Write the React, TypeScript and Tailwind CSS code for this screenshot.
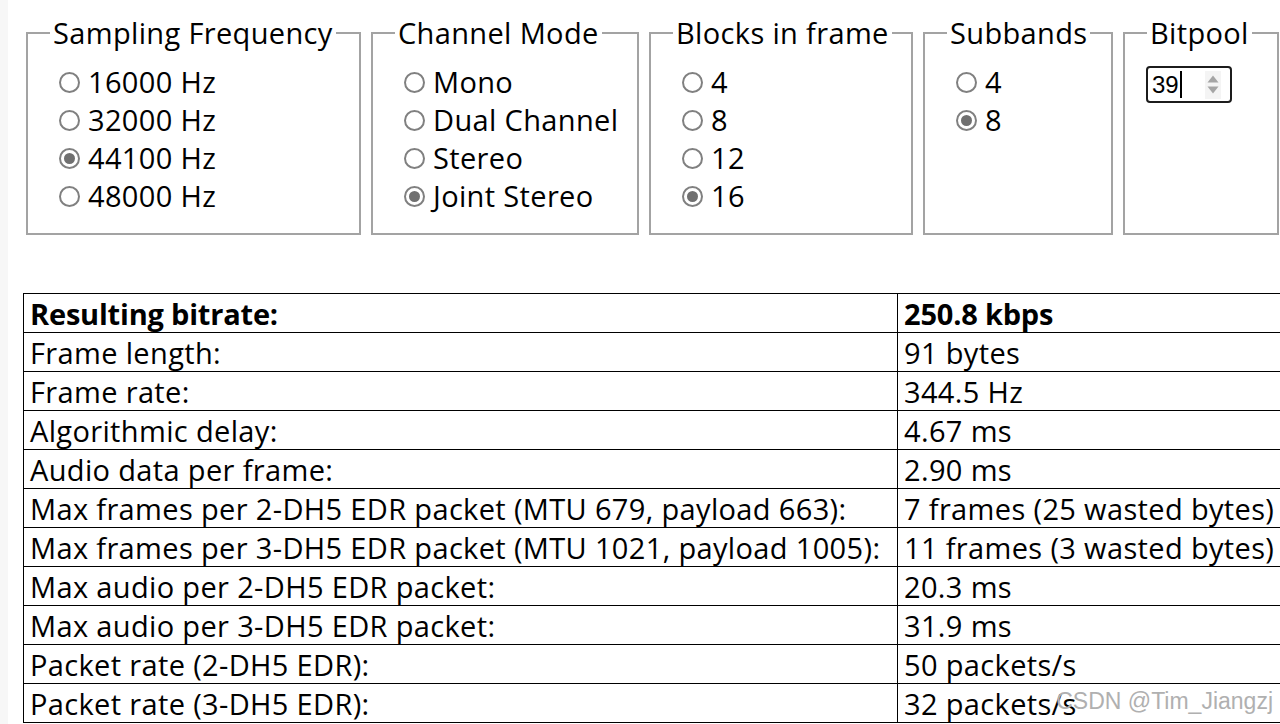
import React from "react";

type Opt = { label: string; checked?: boolean };

function Radio({ label, checked }: Opt) {
  return (
    <div className="flex h-[38px] items-center">
      <span className="flex h-[21px] w-[21px] shrink-0 items-center justify-center rounded-full border-2 border-[#808080] bg-white">
        {checked && <span className="h-[11px] w-[11px] rounded-full bg-[#707070]" />}
      </span>
      <span className="ml-[8px] whitespace-nowrap leading-[38px]">{label}</span>
    </div>
  );
}

function Group({
  title,
  width,
  options,
  children,
}: {
  title: string;
  width: string;
  options?: Opt[];
  children?: React.ReactNode;
}) {
  return (
    <fieldset className={`${width} h-[221px] shrink-0 border-2 border-[#a3a3a3] p-0`}>
      <legend className="ml-[22px] px-[3px] leading-[37px] whitespace-nowrap">{title}</legend>
      <div className="pl-[31px] pt-[12px]">
        {options?.map((o) => (
          <Radio key={o.label} {...o} />
        ))}
        {children}
      </div>
    </fieldset>
  );
}

const rows: [string, string][] = [
  ["Frame length:", "91 bytes"],
  ["Frame rate:", "344.5 Hz"],
  ["Algorithmic delay:", "4.67 ms"],
  ["Audio data per frame:", "2.90 ms"],
  ["Max frames per 2-DH5 EDR packet (MTU 679, payload 663):", "7 frames (25 wasted bytes)"],
  ["Max frames per 3-DH5 EDR packet (MTU 1021, payload 1005):", "11 frames (3 wasted bytes)"],
  ["Max audio per 2-DH5 EDR packet:", "20.3 ms"],
  ["Max audio per 3-DH5 EDR packet:", "31.9 ms"],
  ["Packet rate (2-DH5 EDR):", "50 packets/s"],
  ["Packet rate (3-DH5 EDR):", "32 packets/s"],
];

export default function App() {
  return (
    <div className="relative flex h-[724px] w-[1280px] overflow-hidden bg-white font-['Open_Sans','Noto_Sans',sans-serif] text-[29px] tracking-[0.35px] text-black">
      <div className="w-[8px] shrink-0 bg-[#f7f7f7]" />
      <div className="flex flex-col">
        <div className="flex items-start gap-[10px] pl-[18px] pt-[14px]">
          <Group
            title="Sampling Frequency"
            width="w-[335px]"
            options={[
              { label: "16000 Hz" },
              { label: "32000 Hz" },
              { label: "44100 Hz", checked: true },
              { label: "48000 Hz" },
            ]}
          />
          <Group
            title="Channel Mode"
            width="w-[268px]"
            options={[
              { label: "Mono" },
              { label: "Dual Channel" },
              { label: "Stereo" },
              { label: "Joint Stereo", checked: true },
            ]}
          />
          <Group
            title="Blocks in frame"
            width="w-[264px]"
            options={[{ label: "4" }, { label: "8" }, { label: "12" }, { label: "16", checked: true }]}
          />
          <Group title="Subbands" width="w-[190px]" options={[{ label: "4" }, { label: "8", checked: true }]} />
          <fieldset className="h-[221px] w-[156px] shrink-0 border-2 border-[#a3a3a3] p-0">
            <legend className="ml-[22px] px-[3px] leading-[37px] whitespace-nowrap">Bitpool</legend>
            <div className="pl-[21px] pt-[15px]">
              <div className="flex h-[37px] w-[86px] items-center rounded-[4px] border-[2.5px] border-[#1c1c1c] bg-white pl-[4px] font-['Liberation_Sans',sans-serif] text-[24px] tracking-normal">
                <span className="leading-none">39</span>
                <span className="ml-[1px] h-[27px] w-[2px] bg-black" />
                <span className="ml-auto mr-[9px] flex h-[28px] w-[16px] flex-col items-center justify-center gap-[3px] bg-[#f4f4f4]">
                  <svg width="12" height="8" viewBox="0 0 12 8">
                    <path d="M6 0.5 L11.5 7.5 L0.5 7.5 Z" fill="#a5a5a5" />
                  </svg>
                  <svg width="12" height="8" viewBox="0 0 12 8">
                    <path d="M0.5 0.5 L11.5 0.5 L6 7.5 Z" fill="#a5a5a5" />
                  </svg>
                </span>
              </div>
            </div>
          </fieldset>
        </div>

        <table className="ml-[15px] mt-[58px] w-[1270px] table-fixed border-collapse">
          <colgroup>
            <col className="w-[874px]" />
            <col />
          </colgroup>
          <tbody>
            <tr className="h-[39px] font-bold tracking-[-0.2px]">
              <td className="border border-black px-[6px] py-0 leading-[37px] whitespace-nowrap">Resulting bitrate:</td>
              <td className="border border-black px-[6px] py-0 leading-[37px] whitespace-nowrap">250.8 kbps</td>
            </tr>
            {rows.map(([k, v]) => (
              <tr key={k} className="h-[39px]">
                <td className="border border-black px-[6px] py-0 leading-[37px] whitespace-nowrap">{k}</td>
                <td className="border border-black px-[6px] py-0 leading-[37px] whitespace-nowrap">{v}</td>
              </tr>
            ))}
          </tbody>
        </table>
      </div>
      <div className="pointer-events-none absolute bottom-[6px] right-[7px] font-['Liberation_Sans',sans-serif] text-[23px] tracking-normal text-[#b0b0b0]">
        CSDN @Tim_Jiangzj
      </div>
    </div>
  );
}
